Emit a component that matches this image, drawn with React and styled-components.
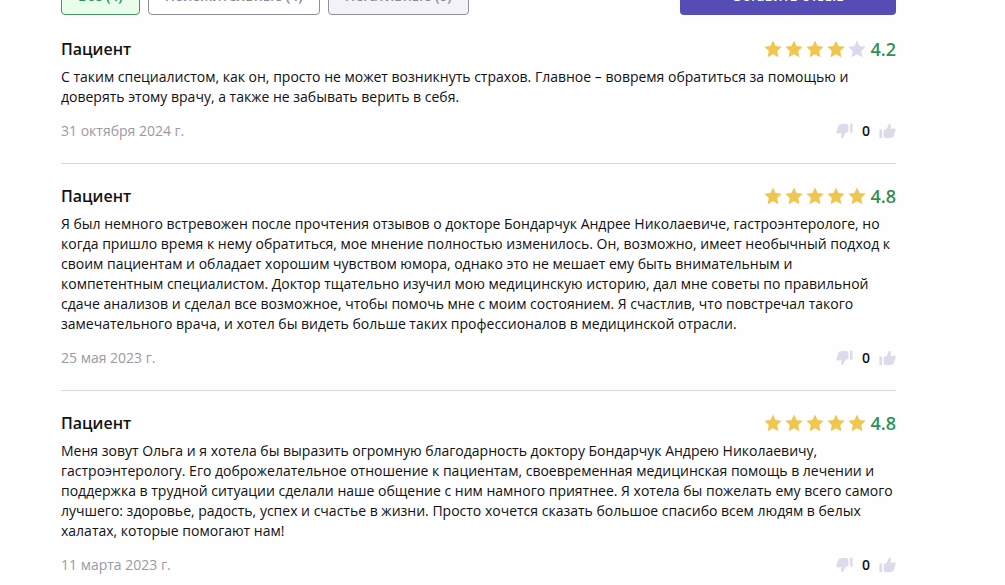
import React from 'react';
import styled, { createGlobalStyle } from 'styled-components';

const filters = [
    { id: 'all', label: 'Все (4)', variant: 'active' },
    { id: 'positive', label: 'Положительные (4)', variant: 'default' },
    { id: 'negative', label: 'Негативные (0)', variant: 'muted' },
];

const reviews = [
    {
        id: 1,
        author: 'Пациент',
        rating: 4.2,
        date: '31 октября 2024 г.',
        text: 'С таким специалистом, как он, просто не может возникнуть страхов. Главное – вовремя обратиться за помощью и доверять этому врачу, а также не забывать верить в себя.',
    },
    {
        id: 2,
        author: 'Пациент',
        rating: 4.8,
        date: '25 мая 2023 г.',
        text: 'Я был немного встревожен после прочтения отзывов о докторе Бондарчук Андрее Николаевиче, гастроэнтерологе, но когда пришло время к нему обратиться, мое мнение полностью изменилось. Он, возможно, имеет необычный подход к своим пациентам и обладает хорошим чувством юмора, однако это не мешает ему быть внимательным и компетентным специалистом. Доктор тщательно изучил мою медицинскую историю, дал мне советы по правильной сдаче анализов и сделал все возможное, чтобы помочь мне с моим состоянием. Я счастлив, что повстречал такого замечательного врача, и хотел бы видеть больше таких профессионалов в медицинской отрасли.',
    },
    {
        id: 3,
        author: 'Пациент',
        rating: 4.8,
        date: '11 марта 2023 г.',
        text: 'Меня зовут Ольга и я хотела бы выразить огромную благодарность доктору Бондарчук Андрею Николаевичу, гастроэнтерологу. Его доброжелательное отношение к пациентам, своевременная медицинская помощь в лечении и поддержка в трудной ситуации сделали наше общение с ним намного приятнее. Я хотела бы пожелать ему всего самого лучшего: здоровье, радость, успех и счастье в жизни. Просто хочется сказать большое спасибо всем людям в белых халатах, которые помогают нам!',
    },
];

const filterColors = {
    active: { color: '#2f9156', border: '#43965f', background: '#e9fdec' },
    default: { color: '#8c8a99', border: '#8f8d9b', background: '#ffffff' },
    muted: { color: '#8c8a99', border: '#918f9e', background: '#f4f2f9' },
};

const Star = ({ filled }) => (
    <StarIcon viewBox="0 0 18 18" $filled={filled} aria-hidden="true">
        <path d="M9 0.4 11.5 6 17.7 6.8 13.2 10.9 14.4 17.2 9 14.2 3.6 17.2 4.8 10.9 0.3 6.8 6.5 6Z" />
    </StarIcon>
);

const ThumbUp = () => (
    <ThumbIcon viewBox="0 0 17 16" aria-hidden="true">
        <path d="M0.4 6.4H3V15.2H0.4zM4.6 7.6 8 5.6 10 0.8C11.6 0.8 12.4 2 12 3.4L11.2 5.8 15.4 5.4C16.5 5.4 17 6.4 16.6 7.3L14.6 13.2C14.2 14.2 13.6 14.6 12.6 14.7L7.2 15.2 4.6 14Z" />
    </ThumbIcon>
);

const ThumbDown = () => (
    <ThumbIcon viewBox="0 0 17 16" aria-hidden="true">
        <path d="M14 0.8h2.6V9.6H14zM12.4 8.4 9 10.4 7 15.2C5.4 15.2 4.6 14 5 12.6L5.8 10.2 1.6 10.6C0.5 10.6 0 9.6 0.4 8.7L2.4 2.8C2.8 1.8 3.4 1.4 4.4 1.3L9.8 0.8 12.4 2Z" />
    </ThumbIcon>
);

const Review = ({ review }) => {
    const { author, rating, date, text } = review
    return <ReviewItem>
        <ReviewHeader>
            <Author>{author}</Author>
            <Rating>
                <Stars>
                    {[1, 2, 3, 4, 5].map((n) => <Star key={n} filled={n <= Math.round(rating)} />)}
                </Stars>
                <Score>{rating}</Score>
            </Rating>
        </ReviewHeader>
        <ReviewText>{text}</ReviewText>
        <ReviewFooter>
            <ReviewDate>{date}</ReviewDate>
            <Votes>
                <VoteButton type="button" aria-label="Не нравится"><ThumbDown /></VoteButton>
                <VoteCount>0</VoteCount>
                <VoteButton type="button" aria-label="Нравится"><ThumbUp /></VoteButton>
            </Votes>
        </ReviewFooter>
    </ReviewItem>;
};

const App = () => {
    return <>
        <GlobalStyle />
        <Page>
            <Toolbar>
                <Filters>
                    {filters.map(({ id, label, variant }) => (
                        <FilterButton key={id} type="button" $variant={variant}>{label}</FilterButton>
                    ))}
                </Filters>
                <LeaveReview type="button">Оставить отзыв</LeaveReview>
            </Toolbar>
            <ReviewList>
                {reviews.map((review) => <Review key={review.id} review={review} />)}
            </ReviewList>
        </Page>
    </>;
};

const GlobalStyle = createGlobalStyle`
  * {
    box-sizing: border-box;
  }

  body {
    margin: 0;
    background: #fefefe;
    color: #111114;
    font-family: 'Open Sans', 'Noto Sans', sans-serif;
    font-size: 14px;
    line-height: 20px;
  }

  button {
    font: inherit;
    cursor: pointer;
  }
`

/* the list is scrolled, so the toolbar is partly above the top edge */
const Page = styled.main`
  max-width: 944px;
  margin-top: -23px;
  padding: 0 48px 0 61px;
`

const Toolbar = styled.div`
  display: flex;
  justify-content: space-between;
  align-items: center;
  margin-bottom: 22px;
`

const Filters = styled.div`
  display: flex;
  gap: 8px;
`

const FilterButton = styled.button`
  height: 38px;
  padding: 0 16px;
  border: 1px solid ${({ $variant }) => filterColors[$variant].border};
  border-radius: 4px;
  background: ${({ $variant }) => filterColors[$variant].background};
  color: ${({ $variant }) => filterColors[$variant].color};
  font-weight: 600;
`

const LeaveReview = styled.button`
  width: 216px;
  height: 38px;
  border: 0;
  border-radius: 4px;
  background: #554cb5;
  color: #ffffff;
  font-weight: 600;
`

const ReviewList = styled.ul`
  margin: 0;
  padding: 0;
  list-style: none;
`

const ReviewItem = styled.li`
  padding-bottom: 22px;

  & + & {
    padding-top: 20px;
    border-top: 1px solid #d9d9dd;
  }

  &:last-child {
    padding-bottom: 0;
  }
`

const ReviewHeader = styled.div`
  display: flex;
  justify-content: space-between;
  align-items: center;
  height: 24px;
`

const Author = styled.h3`
  margin: 0;
  font-size: 16px;
  font-weight: 600;
  line-height: 24px;
`

const Rating = styled.div`
  display: flex;
  align-items: center;
  gap: 4px;
`

const Stars = styled.div`
  display: flex;
  gap: 3px;
`

const StarIcon = styled.svg`
  width: 18px;
  height: 18px;
  fill: ${({ $filled }) => ($filled ? '#f0c550' : '#dcd9ec')};
`

const Score = styled.span`
  color: #2f9156;
  font-size: 18px;
  font-weight: 600;
  line-height: 24px;
`

const ReviewText = styled.p`
  margin: 6px 0 14px;
`

const ReviewFooter = styled.div`
  display: flex;
  justify-content: space-between;
  align-items: center;
`

const ReviewDate = styled.span`
  color: #9b99a6;
`

const Votes = styled.div`
  display: flex;
  align-items: center;
  gap: 9px;
`

const VoteButton = styled.button`
  display: flex;
  padding: 0;
  border: 0;
  background: none;
`

const VoteCount = styled.span`
  font-weight: 600;
`

const ThumbIcon = styled.svg`
  width: 17px;
  height: 16px;
  fill: #dedaec;
`

export default App;
